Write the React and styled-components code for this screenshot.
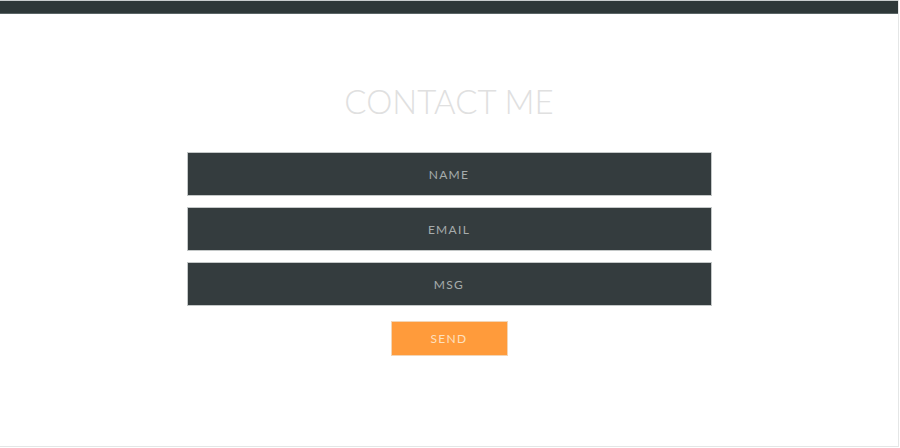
import React from "react";
import styled, { createGlobalStyle } from "styled-components";

const Global = createGlobalStyle`
  html, body {
    margin: 0;
    padding: 0;
    background: #fff;
    font-family: Lato, "Open Sans", sans-serif;
  }
  * { box-sizing: border-box; }
`;

const Page = styled.div`
  width: 899px;
  height: 447px;
  border-right: 1px solid #e4e6e6;
  border-bottom: 1px solid #e4e6e6;
  background: #fff;
`;

const TopBar = styled.div`
  height: 14px;
  background: #2e3839;
  border-top: 1px solid #c9cece;
  border-bottom: 1px solid #5a6566;
`;

const Section = styled.section`
  display: flex;
  flex-direction: column;
  align-items: center;
  padding-top: 67px;
`;

const Title = styled.h1`
  margin: 0 0 31px;
  font-family: Lato, sans-serif;
  font-weight: 300;
  font-size: 33px;
  line-height: 40px;
  color: #e0e0e0;
  letter-spacing: 0;
`;

const Form = styled.form`
  display: flex;
  flex-direction: column;
  align-items: center;
  gap: 11px;
`;

const Field = styled.input`
  width: 525px;
  height: 44px;
  border: 1px solid #c4c8c8;
  background: #343c3e;
  color: #d0d4d4;
  text-align: center;
  font-family: Lato, sans-serif;
  font-size: 12px;
  letter-spacing: 1.3px;
  outline: none;

  &::placeholder {
    color: #a6acac;
  }
`;

const Send = styled.button`
  margin-top: 4px;
  width: 117px;
  height: 35px;
  border: 1px solid #f3d5b5;
  background: #ff9b3b;
  color: #fde0c0;
  font-family: Lato, sans-serif;
  font-size: 12px;
  letter-spacing: 1.3px;
  cursor: pointer;
`;

export default function App() {
  return (
    <>
      <Global />
      <Page>
        <TopBar />
        <Section>
          <Title>CONTACT ME</Title>
          <Form onSubmit={(e) => e.preventDefault()}>
            <Field placeholder="NAME" />
            <Field placeholder="EMAIL" />
            <Field placeholder="MSG" />
            <Send type="submit">SEND</Send>
          </Form>
        </Section>
      </Page>
    </>
  );
}
